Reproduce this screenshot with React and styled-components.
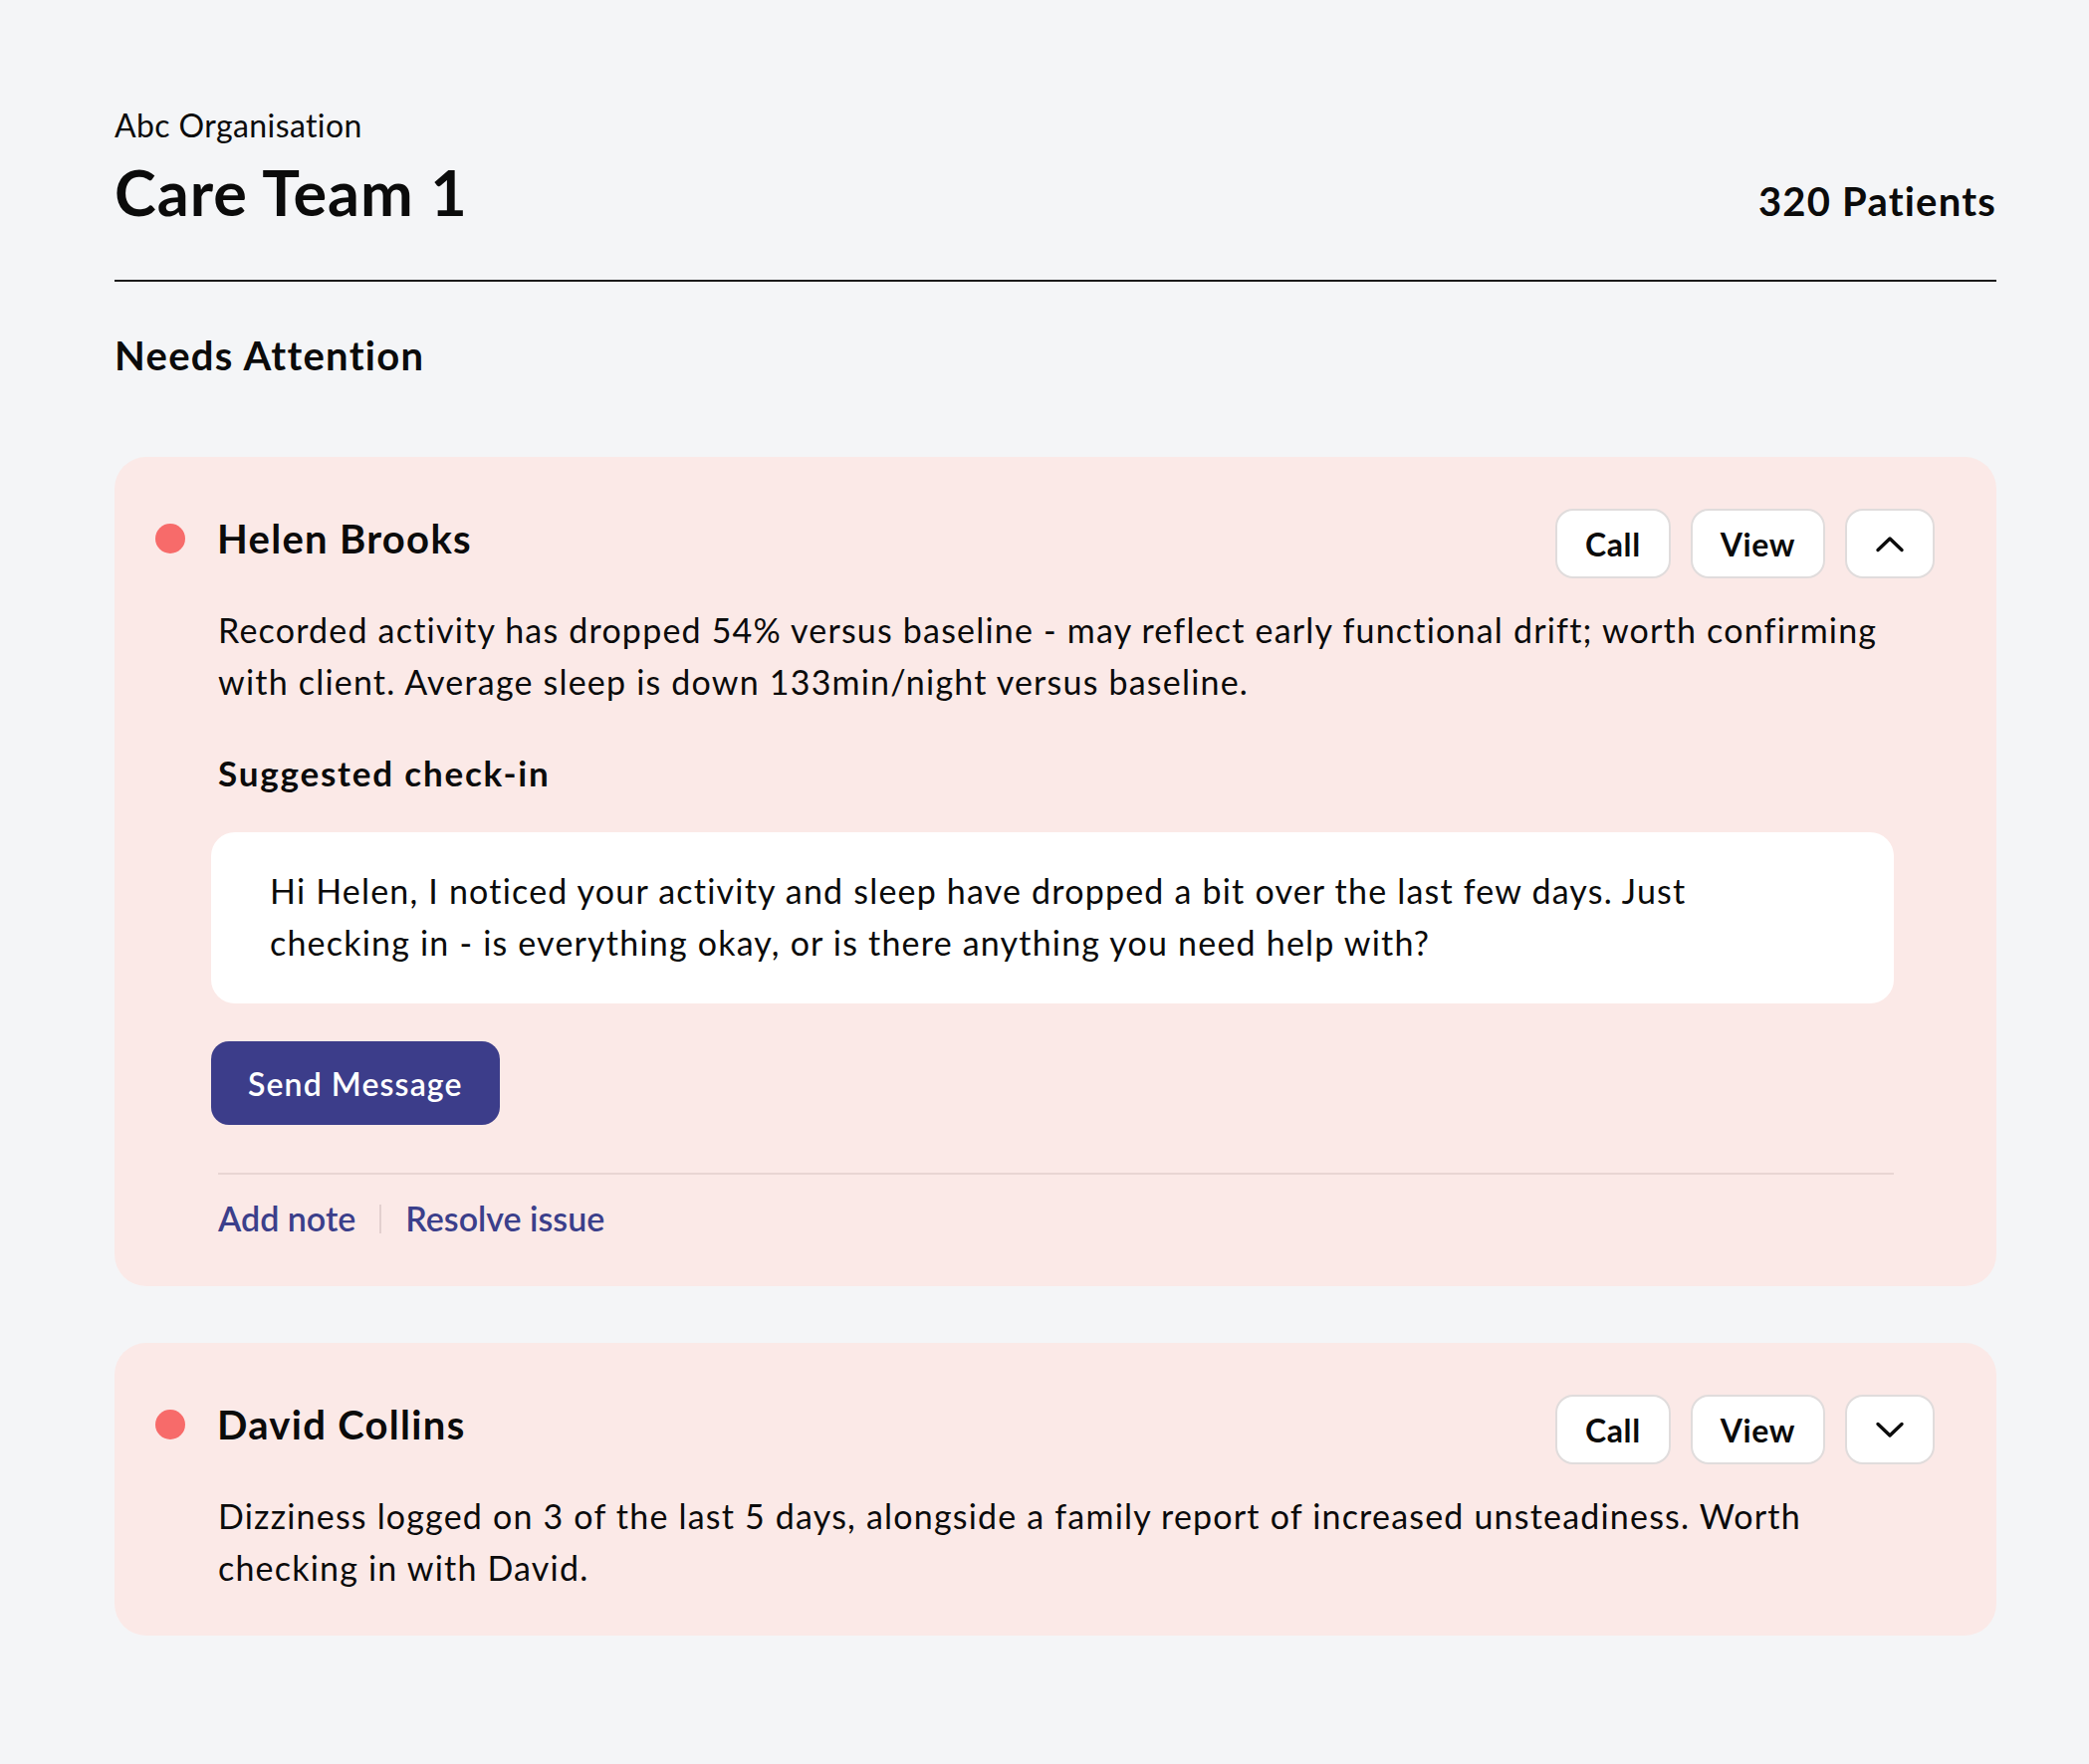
import styled, { createGlobalStyle } from "styled-components";

const GlobalStyle = createGlobalStyle`
  body {
    margin: 0;
    background: #f4f5f7;
    font-family: "Lato", "Noto Sans", sans-serif;
    color: #0b0b0b;
  }
`;

const patients = [
  {
    name: "Helen Brooks",
    expanded: true,
    summary:
      "Recorded activity has dropped 54% versus baseline - may reflect early functional drift; worth confirming with client. Average sleep is down 133min/night versus baseline.",
    message:
      "Hi Helen, I noticed your activity and sleep have dropped a bit over the last few days. Just checking in - is everything okay, or is there anything you need help with?",
  },
  {
    name: "David Collins",
    expanded: false,
    summary:
      "Dizziness logged on 3 of the last 5 days, alongside a family report of increased unsteadiness. Worth checking in with David.",
  },
];

function Chevron({ up }) {
  return (
    <svg width="30" height="17" viewBox="0 0 30 17" fill="none">
      <polyline
        points={up ? "3,14.5 15,3 27,14.5" : "3,2.5 15,14 27,2.5"}
        stroke="#0b0b0b"
        strokeWidth="3.4"
        strokeLinecap="round"
        strokeLinejoin="round"
      />
    </svg>
  );
}

function PatientCard({ patient }) {
  return (
    <Card>
      <CardHeader>
        <Identity>
          <StatusDot />
          <PatientName>{patient.name}</PatientName>
        </Identity>
        <Actions>
          <GhostButton>Call</GhostButton>
          <GhostButton>View</GhostButton>
          <ToggleButton aria-label="toggle">
            <Chevron up={patient.expanded} />
          </ToggleButton>
        </Actions>
      </CardHeader>
      <CardBody>
        <Summary>{patient.summary}</Summary>
        {patient.expanded && (
          <>
            <SubHeading>Suggested check-in</SubHeading>
            <MessageBox>
              <MessageText>{patient.message}</MessageText>
            </MessageBox>
            <SendButton>Send Message</SendButton>
            <Rule />
            <LinkRow>
              <TextLink>Add note</TextLink>
              <LinkDivider />
              <TextLink>Resolve issue</TextLink>
            </LinkRow>
          </>
        )}
      </CardBody>
    </Card>
  );
}

export default function App() {
  return (
    <>
      <GlobalStyle />
      <Page>
        <TopBar>
          <div>
            <OrgName>Abc Organisation</OrgName>
            <TeamTitle>Care Team 1</TeamTitle>
          </div>
          <PatientCount>320 Patients</PatientCount>
        </TopBar>
        <HeaderRule />
        <SectionTitle>Needs Attention</SectionTitle>
        <CardList>
          {patients.map((p) => (
            <PatientCard key={p.name} patient={p} />
          ))}
        </CardList>
      </Page>
    </>
  );
}

const Page = styled.main`
  padding: 107px 93px 120px 115px;
`;

const TopBar = styled.header`
  display: flex;
  justify-content: space-between;
  align-items: last baseline;
`;

const OrgName = styled.div`
  font-size: 32px;
  line-height: 38px;
  font-weight: 400;
  letter-spacing: 0.4px;
`;

const TeamTitle = styled.h1`
  margin: 9px 0 0;
  font-size: 63px;
  line-height: 77px;
  font-weight: 700;
  letter-spacing: 1px;
`;

const PatientCount = styled.div`
  font-size: 40px;
  line-height: 48px;
  font-weight: 700;
  letter-spacing: 1.2px;
`;

const HeaderRule = styled.div`
  height: 2px;
  margin-top: 50px;
  background: #1b1b1b;
`;

const SectionTitle = styled.h2`
  margin: 50px 0 0;
  font-size: 40px;
  line-height: 48px;
  font-weight: 700;
  letter-spacing: 1.3px;
`;

const CardList = styled.div`
  display: flex;
  flex-direction: column;
  gap: 57px;
  margin-top: 78px;
`;

const Card = styled.section`
  background: #fbe9e7;
  border-radius: 32px;
  padding: 52px 62px 42px 41px;
`;

const CardHeader = styled.div`
  display: flex;
  align-items: center;
  justify-content: space-between;
`;

const Identity = styled.div`
  display: flex;
  align-items: center;
  margin-bottom: 10px;
`;

const StatusDot = styled.span`
  width: 30px;
  height: 30px;
  border-radius: 50%;
  background: #f76b6a;
  margin-right: 32px;
`;

const PatientName = styled.h3`
  margin: 0;
  font-size: 40px;
  line-height: 48px;
  font-weight: 700;
  letter-spacing: 1.3px;
`;

const Actions = styled.div`
  display: flex;
  gap: 20px;
`;

const GhostButton = styled.button`
  height: 70px;
  padding: 0 28px;
  border: 2px solid #e0dcdc;
  border-radius: 18px;
  background: #ffffff;
  font-family: inherit;
  font-size: 32px;
  font-weight: 700;
  letter-spacing: 0.6px;
  color: #0b0b0b;
`;

const ToggleButton = styled(GhostButton)`
  width: 90px;
  padding: 0;
  display: flex;
  align-items: center;
  justify-content: center;
`;

const CardBody = styled.div`
  padding: 0 41px 0 63px;
`;

const Summary = styled.p`
  margin: 26px -12px 0 0;
  font-size: 34px;
  line-height: 52px;
  letter-spacing: 1.2px;
`;

const SubHeading = styled.h4`
  margin: 39px 0 0;
  font-size: 35px;
  line-height: 52px;
  font-weight: 700;
  letter-spacing: 1.8px;
`;

const MessageBox = styled.div`
  margin-top: 34px;
  margin-left: -7px;
  background: #ffffff;
  border-radius: 24px;
  padding: 33px 100px 35px 59px;
`;

const MessageText = styled.p`
  margin: 0;
  font-size: 34px;
  line-height: 52px;
  letter-spacing: 1.2px;
`;

const SendButton = styled.button`
  margin-top: 38px;
  margin-left: -7px;
  height: 84px;
  padding: 0 37px;
  border: none;
  border-radius: 18px;
  background: #3c3d8a;
  color: #ffffff;
  font-family: inherit;
  font-size: 32px;
  font-weight: 600;
  letter-spacing: 1.1px;
`;

const Rule = styled.div`
  height: 2px;
  margin-top: 48px;
  background: #e8d5d3;
`;

const LinkRow = styled.div`
  display: flex;
  align-items: center;
  margin-top: 18px;
`;

const TextLink = styled.a`
  font-size: 34px;
  line-height: 52px;
  font-weight: 600;
  color: #3b3f8b;
  cursor: pointer;
`;

const LinkDivider = styled.span`
  width: 2px;
  height: 29px;
  margin: 0 24px;
  background: #e3d0cf;
`;
